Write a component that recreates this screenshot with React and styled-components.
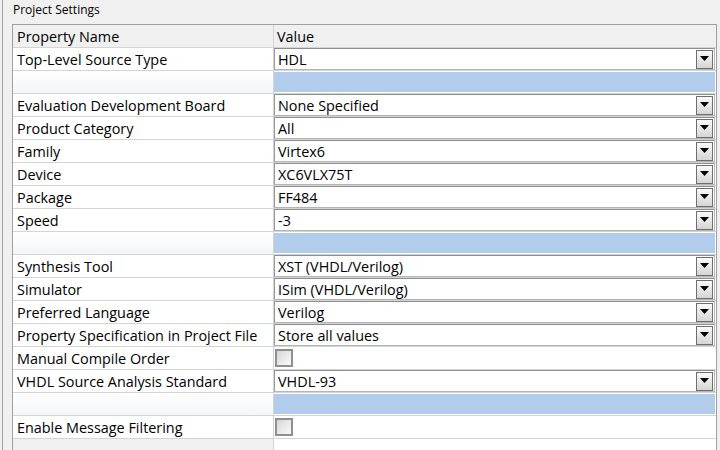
import styled, { createGlobalStyle } from "styled-components";

const Global = createGlobalStyle`
  html, body {
    margin: 0;
    padding: 0;
    background: #f0f0f0;
    font-family: "Open Sans", "Noto Sans", "DejaVu Sans", sans-serif;
    font-size: 14.4px;
    color: #000;
  }
`;

const Page = styled.div`
  width: 720px;
  height: 450px;
  overflow: hidden;
  padding-left: 2px;
  box-sizing: border-box;
`;

const Panel = styled.div`
  height: 100%;
  border-left: 1px solid #a0a0a0;
  padding-left: 9px;
  padding-right: 3px;
`;

const Title = styled.div`
  height: 24px;
  line-height: 19px;
  font-size: 12px;
  padding-left: 1px;
`;

const Table = styled.div`
  border: 1px solid #a0a0a0;
  border-bottom: none;
  background: #fff;
`;

const Row = styled.div`
  display: grid;
  grid-template-columns: 261px 1fr;
  grid-template-rows: 22px;
  height: 23px;
  box-sizing: border-box;
  border-bottom: 1px solid #d4d4d4;
`;

const NameCell = styled.div`
  height: 22px;
  border-right: 1px solid #d4d4d4;
  padding-left: 4px;
  line-height: 24px;
  background: ${(p) => (p.$head ? "#f0f0f0" : p.$empty ? "#f0f0f0" : p.$blank ? "linear-gradient(#fff, #f4f5f7)" : "#fff")};
  white-space: nowrap;
`;

const ValueCell = styled.div`
  height: 22px;
  box-sizing: border-box;
  background: ${(p) => (p.$head ? "#f0f0f0" : "#fff")};
  padding-left: ${(p) => (p.$head ? "3px" : "0")};
  line-height: 24px;
  display: flex;
  align-items: stretch;
`;

const Combo = styled.div`
  flex: 1;
  box-sizing: border-box;
  height: 22px;
  display: flex;
  align-items: center;
  justify-content: space-between;
  border: 1px solid #b5b5b5;
  border-top-color: #8e8e8e;
  border-left-color: #9a9a9a;
  padding-left: 3px;
  padding-right: 1px;
  background: #fff;
  margin-right: 1px;
  line-height: 20px;

  span {
    padding-top: 2px;
  }
`;

const DropButton = styled.div`
  width: 15px;
  height: 17px;
  border: 1px solid #6f6f6f;
  background: linear-gradient(#fafafa, #d5d5d5);
  display: flex;
  align-items: center;
  justify-content: center;
`;

const Blue = styled.div`
  flex: 1;
  margin: 1px 1px 1px 0;
  background: #b1cdeb;
`;

const Check = styled.div`
  width: 14px;
  height: 14px;
  margin: 2px 0 0 1px;
  border: 2px solid #8f8f8f;
  background: linear-gradient(135deg, #d6d6d6, #fbfbfb);
`;

const Arrow = () => (
  <svg width="9" height="6" viewBox="0 0 9 6">
    <path d="M0 0H9L4.5 5Z" fill="#000" />
  </svg>
);

const rows = [
  { name: "Top-Level Source Type", value: "HDL" },
  { blank: true },
  { name: "Evaluation Development Board", value: "None Specified" },
  { name: "Product Category", value: "All" },
  { name: "Family", value: "Virtex6" },
  { name: "Device", value: "XC6VLX75T" },
  { name: "Package", value: "FF484" },
  { name: "Speed", value: "-3" },
  { blank: true },
  { name: "Synthesis Tool", value: "XST (VHDL/Verilog)" },
  { name: "Simulator", value: "ISim (VHDL/Verilog)" },
  { name: "Preferred Language", value: "Verilog" },
  { name: "Property Specification in Project File", value: "Store all values" },
  { name: "Manual Compile Order", check: true },
  { name: "VHDL Source Analysis Standard", value: "VHDL-93" },
  { blank: true },
  { name: "Enable Message Filtering", check: true },
  { empty: true },
];

export default function App() {
  return (
    <Page>
      <Global />
      <Panel>
        <Title>Project Settings</Title>
        <Table>
          <Row>
            <NameCell $head>Property Name</NameCell>
            <ValueCell $head>Value</ValueCell>
          </Row>
          {rows.map((r, i) => (
            <Row key={i}>
              <NameCell $blank={r.blank} $empty={r.empty}>{r.name}</NameCell>
              <ValueCell>
                {r.value && (
                  <Combo>
                    <span>{r.value}</span>
                    <DropButton>
                      <Arrow />
                    </DropButton>
                  </Combo>
                )}
                {r.blank && <Blue />}
                {r.check && <Check />}
              </ValueCell>
            </Row>
          ))}
        </Table>
      </Panel>
    </Page>
  );
}
